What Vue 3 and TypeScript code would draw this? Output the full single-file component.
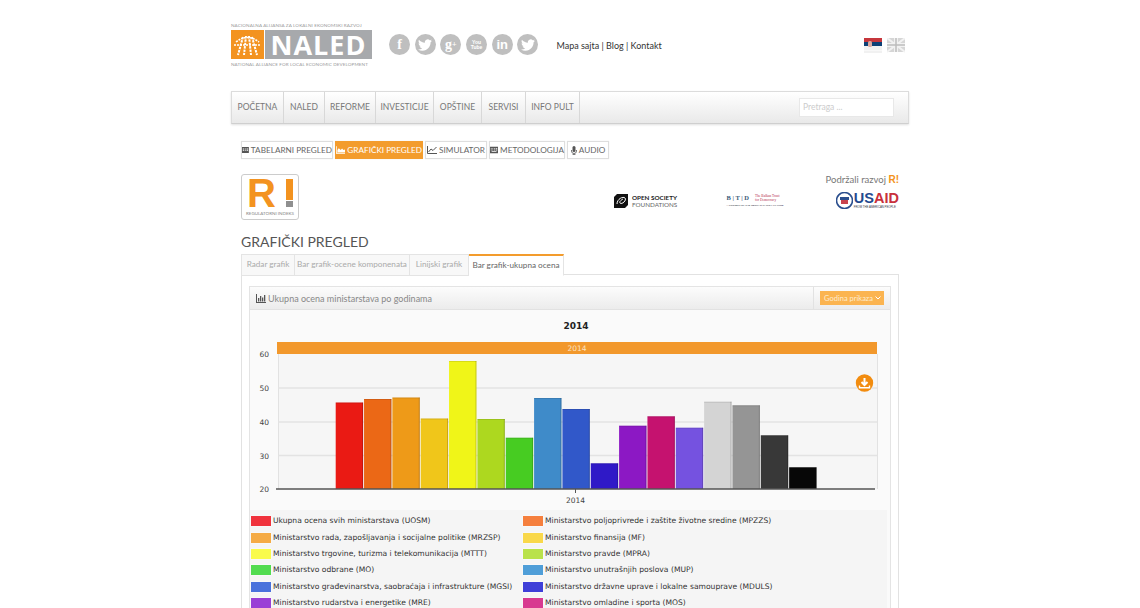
<script setup lang="ts">
// stubici grafikona: [boja, vrh stubica u px]
const bars: [string, number][] = [
  ['#ea1a14', 399.5], ['#eb6816', 396], ['#ee9a18', 394.5], ['#f0c61a', 415.5],
  ['#f0f518', 358], ['#add81f', 416], ['#47cc22', 434.7], ['#3f8bc9', 395],
  ['#3158c9', 406], ['#2f19c7', 460.3], ['#8c18c4', 422.7], ['#c5126f', 413.3],
  ['#7552e0', 424.7], ['#d4d4d4', 398.7], ['#959595', 402.3], ['#383838', 432.3],
  ['#070707', 464.3],
]

const yTicks = [
  { label: '60', y: 351 }, { label: '50', y: 385 }, { label: '40', y: 419 },
  { label: '30', y: 452.5 }, { label: '20', y: 486 },
]

const menu = [
  { label: 'POČETNA', w: 52 }, { label: 'NALED', w: 41 }, { label: 'REFORME', w: 51 },
  { label: 'INVESTICIJE', w: 58 }, { label: 'OPŠTINE', w: 48 }, { label: 'SERVISI', w: 44 },
  { label: 'INFO PULT', w: 54 },
]

const tabs = ['Radar grafik', 'Bar grafik-ocene komponenata', 'Linijski grafik', 'Bar grafik-ukupna ocena']

const legend = [
  ['#f0323c', 'Ukupna ocena svih ministarstava (UOSM)'],
  ['#f57f3d', 'Ministarstvo poljoprivrede i zaštite životne sredine (MPZZS)'],
  ['#f5ab45', 'Ministarstvo rada, zapošljavanja i socijalne politike (MRZSP)'],
  ['#f9d84a', 'Ministarstvo finansija (MF)'],
  ['#f9fb4c', 'Ministarstvo trgovine, turizma i telekomunikacija (MTTT)'],
  ['#b9e24a', 'Ministarstvo pravde (MPRA)'],
  ['#52dc50', 'Ministarstvo odbrane (MO)'],
  ['#4f9ed8', 'Ministarstvo unutrašnjih poslova (MUP)'],
  ['#4a72dc', 'Ministarstvo građevinarstva, saobraćaja i infrastrukture (MGSI)'],
  ['#3f3fd8', 'Ministarstvo državne uprave i lokalne samouprave (MDULS)'],
  ['#9a3fd6', 'Ministarstvo rudarstva i energetike (MRE)'],
  ['#d83a90', 'Ministarstvo omladine i sporta (MOS)'],
]

const bird = 'M23.95 4.57a10 10 0 01-2.82.78 4.96 4.96 0 002.16-2.72c-.95.55-2 .96-3.13 1.18a4.92 4.92 0 00-8.38 4.48C7.69 8.1 4.07 6.13 1.64 3.16a4.82 4.82 0 00-.67 2.48c0 1.71.87 3.21 2.19 4.1a4.9 4.9 0 01-2.23-.62v.06a4.92 4.92 0 003.95 4.83 5 5 0 01-2.21.08 4.94 4.94 0 004.6 3.42 9.87 9.87 0 01-6.1 2.1c-.39 0-.78-.02-1.17-.06a14 14 0 007.56 2.21c9.05 0 14-7.5 14-13.98 0-.21 0-.42-.02-.63A9.94 9.94 0 0024 4.59z'
</script>

<template>
  <div class="page">
    <div class="wrap">
      <header class="top">
        <div class="logo">
          <div class="logo-small">NACIONALNA ALIJANSA ZA LOKALNI EKONOMSKI RAZVOJ</div>
          <div class="logo-main">
            <div class="logo-sq">
              <svg width="33" height="29" viewBox="0 0 33 29" fill="none" stroke="#fff">
                <path d="M5 12 Q16 3 28 12" stroke-width="1.6" stroke-dasharray="2 1" />
                <path d="M3 15 H30" stroke-width="1.6" stroke-dasharray="2 1" />
                <path d="M12 7 L7 25 M15 6 L13 25 M18 6 L20 25 M21 7 L26 25" stroke-width="2" stroke-dasharray="2.4 1" />
              </svg>
            </div>
            <div class="logo-name">NALED</div>
          </div>
          <div class="logo-small">NATIONAL ALLIANCE FOR LOCAL ECONOMIC DEVELOPMENT</div>
        </div>

        <div class="socials">
          <span class="soc fb">f</span>
          <span class="soc"><svg width="14" height="14" viewBox="0 0 24 24" fill="#fff"><path :d="bird" /></svg></span>
          <span class="soc gp">g<sup>+</sup></span>
          <span class="soc yt">You<b>Tube</b></span>
          <span class="soc in">in</span>
          <span class="soc"><svg width="14" height="14" viewBox="0 0 24 24" fill="#fff"><path :d="bird" /></svg></span>
        </div>

        <div class="links">Mapa sajta | Blog | Kontakt</div>

        <div class="flags">
          <svg width="18" height="15" viewBox="0 0 18 15">
            <rect width="18" height="4" y="0" fill="#c6363c" />
            <rect width="18" height="4" y="4" fill="#0c4076" />
            <rect width="18" height="4.500" y="8" fill="#f2f2f2" />
            <rect x="4" y="3" width="4" height="6" rx="1.500" fill="#d9a9a0" />
            <rect y="13.500" width="18" height="1" fill="#e4e4e4" />
          </svg>
          <svg width="18" height="15" viewBox="0 0 18 15">
            <rect width="18" height="14" fill="#d6d6d6" />
            <path d="M0 0 L18 14 M18 0 L0 14" stroke="#f2f2f2" stroke-width="2" />
            <path d="M9 0 V14 M0 7 H18" stroke="#f2f2f2" stroke-width="4" />
            <path d="M9 0 V14 M0 7 H18" stroke="#bdbdbd" stroke-width="1.500" />
          </svg>
        </div>
      </header>

      <nav class="nav">
        <a v-for="m in menu" :key="m.label" class="nav-item" :style="{ width: m.w + 'px' }">{{ m.label }}</a>
        <div class="search">Pretraga ...</div>
      </nav>

      <div class="inner">
        <div class="btns">
          <a class="btn">
            <svg width="9" height="8" viewBox="0 0 9 8" fill="#555"><path d="M0 0h9v8H0z M1 2v1.200h2V2z M4 2v1.200h1V2z M6 2v1.200h2V2z M1 4.200v1.200h2V4.200z M4 4.200v1.200h1V4.200z M6 4.200v1.200h2V4.200z" fill-rule="evenodd" /></svg>
            TABELARNI PREGLED
          </a>
          <a class="btn active">
            <svg width="10" height="8" viewBox="0 0 10 8" fill="#fff"><path d="M0 0h.8v7H10v1H0z M1.500 6.500V4L3 2l2 2 1.500-1.500L8 4l2-.5v3z" /></svg>
            GRAFIČKI PREGLED
          </a>
          <a class="btn">
            <svg width="10" height="8" viewBox="0 0 10 8" fill="none" stroke="#555"><path d="M.5 0v7.500H10" /><path d="M1.500 6l2.500-3 2 1.500L9.500 1" /></svg>
            SIMULATOR
          </a>
          <a class="btn">
            <svg width="10" height="8" viewBox="0 0 10 8" fill="#555"><path d="M0 0h10v8H0z M1 1.500v1h1v-1z M3 1.500v1h1v-1z M5 1.500v1h1v-1z M7 1.500v1h2v-1z M1 3.500v1h1v-1z M3 3.500v1h1v-1z M5 3.500v1h1v-1z M7 3.500v1h2v-1z M2 5.500v1h6v-1z" fill-rule="evenodd" /></svg>
            METODOLOGIJA
          </a>
          <a class="btn">
            <svg width="6" height="9" viewBox="0 0 6 9" fill="#555"><rect x="1.500" width="3" height="6" rx="1.500" /><path d="M.5 4v1a2.500 2.500 0 005 0V4M3 7.500V9M1.500 8.700h3" fill="none" stroke="#555" stroke-width=".8" /></svg>
            AUDIO
          </a>
        </div>

        <div class="brand-row">
          <div class="ri">
            <div class="ri-mark">
              <span class="ri-r">R</span>
              <span class="ri-bang"><i class="bar"></i><i class="dot"></i></span>
            </div>
            <div class="ri-text">REGULATORNI INDEKS</div>
          </div>

          <div class="support">
            <div class="support-title">Podržali razvoj <span class="mini-r">R!</span></div>
            <div class="sponsors">
              <div class="osf">
                <svg width="14" height="14" viewBox="0 0 14 14">
                  <path d="M3 0h11v11l-3 3H0V3z" fill="#111" />
                  <path d="M3 10 C3 5 9 2 11 4 C13 6 8 11 6 9 C5 8 7 6 9 5" fill="none" stroke="#fff" stroke-width="1" />
                </svg>
                <div class="osf-text"><b>OPEN SOCIETY</b><span>FOUNDATIONS</span></div>
              </div>
              <div class="btd">
                <div class="btd-top">
                  <span class="btd-l">B | T | D</span>
                  <span class="btd-r">The Balkan Trust<br />for Democracy</span>
                </div>
                <div class="btd-sub">A PROJECT OF THE GERMAN MARSHALL FUND</div>
              </div>
              <div class="usaid">
                <svg width="17" height="17" viewBox="0 0 17 17">
                  <circle cx="8.500" cy="8.500" r="8" fill="#fff" stroke="#2b4f8e" stroke-width="1.600" />
                  <rect x="4" y="5" width="9" height="3" fill="#2b4f8e" />
                  <rect x="5" y="8" width="7" height="4" fill="#c8434d" />
                </svg>
                <div class="usaid-text">
                  <div class="usaid-name"><span>US</span><em>AID</em></div>
                  <div class="usaid-sub">FROM THE AMERICAN PEOPLE</div>
                </div>
              </div>
            </div>
          </div>
        </div>

        <h2 class="title">GRAFIČKI PREGLED</h2>

        <div class="tabs">
          <a v-for="(t, i) in tabs" :key="t" class="tab" :class="{ on: i === 3 }">{{ t }}</a>
        </div>

        <section class="panel">
          <div class="widget">
            <div class="widget-head">
              <div class="widget-title">
                <svg width="10" height="9" viewBox="0 0 10 9" fill="#555"><path d="M0 0h1v8h9v1H0z M2 4h1.300v3.500H2z M4 2h1.300v5.500H4z M6 3.500h1.300v4H6z M8 1h1.300v6.500H8z" /></svg>
                Ukupna ocena ministarstava po godinama
              </div>
              <div class="widget-tool"><a class="year-btn">Godina prikaza <svg width="6" height="4" viewBox="0 0 6 4" fill="none" stroke="#fff"><path d="M.5.500 3 3 5.500.500" /></svg></a></div>
            </div>

            <svg class="chart" width="641" height="200" viewBox="250 307 641 200">
              <text x="576" y="326" class="c-title" text-anchor="middle">2014</text>
              <rect x="278" y="351" width="599" height="135" fill="#f6f6f6" />
              <path d="M278.500 351V486M877.500 351V486" stroke="#e2e2e2" />
              <path d="M278 385H877M278 419H877M278 452.500H877" stroke="#e3e3e3" stroke-width="1.500" />
              <rect x="277" y="339" width="600" height="12" fill="#f2982c" />
              <text x="577" y="348" class="c-band" text-anchor="middle">2014</text>
              <text v-for="t in yTicks" :key="t.label" x="269" :y="t.y + 3" class="c-tick" text-anchor="end">{{ t.label }}</text>
              <g v-for="(b, i) in bars" :key="b[0]">
                <rect :x="335.7 + i * 28.34" :y="b[1]" width="27.400" :height="486 - b[1]" :fill="b[0]" />
                <rect :x="335.7 + i * 28.34 + 26.400" :y="b[1]" width="1" :height="486 - b[1]" fill="#000" opacity=".18" />
                <rect :x="335.7 + i * 28.34" :y="b[1]" width="27.400" height="1" fill="#000" opacity=".1" />
              </g>
              <path d="M276 486H875" stroke="#555" stroke-width="1.500" />
              <path d="M575.500 486V490" stroke="#555" />
              <text x="575.500" y="500" class="c-tick" text-anchor="middle">2014</text>
              <circle cx="864.500" cy="380" r="8.700" fill="#f28c0f" />
              <path d="M864.500 375V381.500M861.500 379 864.500 382 867.500 379" fill="none" stroke="#fff" stroke-width="2" />
              <path d="M859.500 382.500V384.800H869.500V382.500" fill="none" stroke="#fff" stroke-width="1.400" />
            </svg>

            <div class="legend">
              <div v-for="l in legend" :key="l[1]" class="leg-row">
                <i class="swatch" :style="{ background: l[0] }"></i>
                <span>{{ l[1] }}</span>
              </div>
            </div>
          </div>
        </section>
      </div>
    </div>
  </div>
</template>

<style scoped>
.page {
  height: 608px;
  overflow: hidden;
  background: #fff;
  font-family: "Lato", "Open Sans", sans-serif;
  color: #666;
}
.wrap {
  width: 678px;
  margin-left: 231px;
}

/* zaglavlje */
.top {
  display: flex;
  align-items: flex-start;
  height: 91px;
  padding-top: 22px;
  box-sizing: border-box;
}
.logo {
  width: 141px;
}
.logo-small {
  font-size: 4.6px;
  line-height: 6px;
  color: #999;
  white-space: nowrap;
  letter-spacing: .1px;
}
.logo-main {
  display: flex;
  gap: 1px;
  height: 29px;
  margin: 2px 0 2px;
}
.logo-sq {
  width: 33px;
  height: 29px;
  background: #f39320;
}
.logo-name {
  flex: 1;
  background: #a7a9ac;
  color: #fff;
  font: bold 27px/29px "Open Sans", sans-serif;
  text-align: center;
  letter-spacing: 1px;
}
.socials {
  display: flex;
  gap: 4.700px;
  margin: 12px 0 0 17px;
}
.soc {
  width: 21px;
  height: 21px;
  border-radius: 50%;
  background: #bfbfbf;
  color: #fff;
  display: flex;
  align-items: center;
  justify-content: center;
  font: bold 14px/21px "Liberation Serif", serif;
}
.soc.gp sup {
  font-size: 8px;
  line-height: 0;
}
.soc.yt {
  flex-direction: column;
  font: bold 5px/5px "Liberation Sans", sans-serif;
}
.soc.yt b {
  font-size: 5px;
}
.soc.in {
  font: bold 13px/21px "Liberation Sans", sans-serif;
}
.links {
  margin: 18px 0 0 18px;
  font-size: 9px;
  line-height: 11px;
  color: #333;
  white-space: nowrap;
  width: 308px;
}
.flags {
  display: flex;
  gap: 5px;
  margin-top: 16px;
}

/* glavni meni */
.nav {
  display: flex;
  align-items: center;
  height: 33px;
  box-sizing: border-box;
  border: 1px solid #dcdcdc;
  border-bottom-color: #cfcfcf;
  background: linear-gradient(#fff, #e9e9e9);
  box-shadow: 0 1px 2px rgba(0, 0, 0, .12);
  position: relative;
}
.nav-item {
  height: 100%;
  box-sizing: border-box;
  border-right: 1px solid #d8d8d8;
  font-size: 8.500px;
  line-height: 31px;
  text-align: center;
  color: #777;
  white-space: nowrap;
}
.search {
  width: 95px;
  height: 19px;
  box-sizing: border-box;
  margin-left: auto;
  margin-right: 14px;
  padding-left: 3px;
  background: #fff;
  border: 1px solid #e8e8e8;
  font-size: 8.500px;
  line-height: 17px;
  color: #ccc;
}

.inner {
  padding: 17px 10px 0;
}
.btns {
  display: grid;
  grid-template-columns: 92px 88px 62px 76px 42px;
  gap: 2px;
}
.btn {
  height: 18px;
  box-sizing: border-box;
  border: 1px solid #dedede;
  box-shadow: 0 0 1px rgba(0, 0, 0, .1);
  background: #fff;
  display: flex;
  align-items: center;
  justify-content: center;
  gap: 2px;
  font-size: 8.200px;
  color: #666;
  white-space: nowrap;
}
.btn.active {
  background: #f39c2d;
  border-color: #f39c2d;
  color: #fff;
}

/* R! i donatori */
.brand-row {
  display: flex;
  justify-content: space-between;
  margin-top: 15px;
  height: 45px;
}
.ri {
  width: 58px;
  height: 46px;
  box-sizing: border-box;
  border: 1px solid #ccc;
  border-radius: 3px;
  padding: 4px 4px 0;
}
.ri-mark {
  display: flex;
  justify-content: space-between;
  height: 29px;
  padding: 0 1px 0 1px;
}
.ri-r {
  font: bold 40px/29px "Liberation Sans", sans-serif;
  color: #f39320;
}
.ri-bang {
  width: 7px;
  display: flex;
  flex-direction: column;
  gap: 1px;
}
.bar {
  height: 21px;
  background: #f39320;
}
.dot {
  height: 6px;
  background: #8f8f8f;
}
.ri-text {
  font-size: 4.500px;
  line-height: 8px;
  margin-top: 2px;
  color: #888;
  text-align: center;
  white-space: nowrap;
}
.support {
  width: 285px;
  display: flex;
  flex-direction: column;
  align-items: flex-end;
}
.support-title {
  font-size: 9.500px;
  line-height: 12px;
  color: #777;
  white-space: nowrap;
}
.mini-r {
  color: #f39320;
  font: bold 10px/12px "Liberation Sans", sans-serif;
}
.sponsors {
  display: flex;
  align-items: center;
  justify-content: space-between;
  width: 100%;
  margin-top: 6px;
}
.osf {
  display: flex;
  align-items: center;
  gap: 4px;
}
.osf-text {
  display: flex;
  flex-direction: column;
  font: 6.300px/7px "Lato", sans-serif;
  color: #666;
  white-space: nowrap;
}
.osf-text b {
  color: #222;
}
.btd {
  width: 60px;
}
.btd-top {
  display: flex;
  gap: 6px;
  align-items: center;
}
.btd-l {
  font: bold 6.500px/10px "Liberation Serif", serif;
  color: #3a5a78;
  white-space: nowrap;
}
.btd-r {
  font: 3.500px/4.500px "Liberation Serif", serif;
  color: #b3284a;
  white-space: nowrap;
}
.btd-sub {
  font: 2.500px/4px "Liberation Sans", sans-serif;
  color: #334;
  white-space: nowrap;
  margin-top: 1px;
}
.usaid {
  display: flex;
  align-items: center;
  gap: 1px;
}
.usaid-name {
  font: bold 14.500px/13px "Liberation Sans", sans-serif;
  color: #1f4a8f;
}
.usaid-name em {
  font-style: normal;
  color: #c8303c;
}
.usaid-sub {
  font: 2.800px/4px "Liberation Sans", sans-serif;
  color: #334;
  white-space: nowrap;
}

.title {
  margin: 13px 0 0;
  font-size: 14px;
  line-height: 19px;
  font-weight: 400;
  color: #555;
}

/* tabovi */
.tabs {
  display: grid;
  grid-template-columns: 54px 115px 59px 95px;
  height: 21px;
  margin-top: 3px;
}
.tab {
  box-sizing: border-box;
  border: 1px solid #e4e4e4;
  border-left-width: 0;
  background: #f8f8f8;
  font-size: 8.200px;
  line-height: 19px;
  text-align: center;
  color: #aaa;
  white-space: nowrap;
}
.tab:first-child {
  border-left-width: 1px;
}
.tab.on {
  background: #fff;
  border-top: 2px solid #f39c2d;
  border-bottom-color: #fff;
  color: #666;
  position: relative;
  z-index: 1;
}
.panel {
  margin-top: -1px;
  border: 1px solid #e2e2e2;
  padding: 11px 7px 0 7px;
  height: 400px;
}
.widget {
  border: 1px solid #e4e4e4;
  background: #fafafa;
}
.widget-head {
  display: flex;
  justify-content: space-between;
  height: 22px;
  background: linear-gradient(#fcfcfc, #ececec);
  border-bottom: 1px solid #e2e2e2;
}
.widget-title {
  display: flex;
  align-items: center;
  gap: 2px;
  padding-left: 6px;
  font-size: 9px;
  color: #888;
}
.widget-tool {
  display: flex;
  align-items: center;
  border-left: 1px solid #e2e2e2;
  padding: 0 6px 0 6px;
}
.year-btn {
  display: flex;
  align-items: center;
  gap: 2px;
  height: 14px;
  padding: 0 3px 0 4px;
  background: #fbb450;
  color: #fdeccf;
  font-size: 7.500px;
  white-space: nowrap;
}
.chart {
  display: block;
}
.c-title {
  font: bold 9px "DejaVu Sans", sans-serif;
  fill: #222;
}
.c-band {
  font: 7.500px "DejaVu Sans", sans-serif;
  fill: #fbe3c3;
}
.c-tick {
  font: 7.500px "DejaVu Sans", sans-serif;
  fill: #444;
}
.legend {
  display: grid;
  grid-template-columns: 272px 1fr;
  grid-auto-rows: 16.400px;
  background: #f5f5f5;
  margin-right: 3px;
  padding-top: 3px;
}
.leg-row {
  display: flex;
  align-items: center;
  gap: 2px;
  padding-left: 1px;
  font: 7.600px/16px "DejaVu Sans", sans-serif;
  color: #333;
  white-space: nowrap;
}
.swatch {
  width: 20px;
  height: 10px;
  flex: none;
  box-shadow: 0 0 0 .5px rgba(255, 255, 255, .6);
}
</style>

<style>
html, body {
  margin: 0;
  overflow: hidden;
}
</style>
